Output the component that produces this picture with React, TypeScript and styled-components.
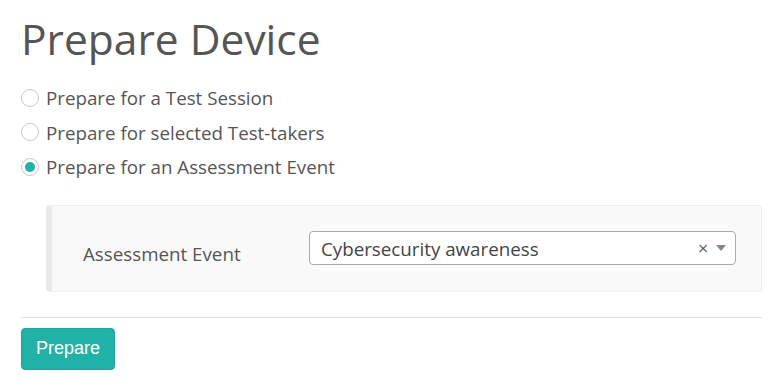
import React, { useState } from "react";
import styled, { createGlobalStyle } from "styled-components";

const GlobalStyle = createGlobalStyle`
  body {
    margin: 0;
    background: #fff;
    font-family: "Open Sans", "Noto Sans", sans-serif;
    color: #555;
  }
`;

const Page = styled.div`
  padding: 0 13px 0 21px;
`;

const Title = styled.h1`
  margin: 11px 0 18px;
  font-size: 42.5px;
  font-weight: 400;
  line-height: 56px;
  color: #555;
`;

const RadioList = styled.div`
  display: flex;
  flex-direction: column;
  gap: 9.5px;
`;

const RadioRow = styled.label`
  display: flex;
  align-items: center;
  gap: 7px;
  font-size: 18.75px;
  line-height: 25px;
  cursor: pointer;
`;

const RadioCircle = styled.span<{ $checked: boolean }>`
  box-sizing: border-box;
  width: 18px;
  height: 18px;
  border-radius: 50%;
  border: 1px solid #c8c8c8;
  background: #fff;
  display: flex;
  align-items: center;
  justify-content: center;
  &::after {
    content: "";
    width: 10px;
    height: 10px;
    border-radius: 50%;
    background: ${(p) => (p.$checked ? "#20b2a6" : "transparent")};
  }
`;

const Panel = styled.div`
  margin: 25.5px 0 0 25px;
  background: #f9f9f9;
  border: 1px solid #eee;
  border-left: 6px solid #eaeaea;
  border-radius: 3px;
  padding: 25px 25px 25px 31px;
  display: flex;
  align-items: center;
`;

const FieldLabel = styled.div`
  width: 226px;
  font-size: 18.75px;
  padding-top: 10px;
`;

const Select = styled.div`
  flex: 1;
  height: 34px;
  box-sizing: border-box;
  background: #fff;
  border: 1px solid #aaa;
  border-radius: 4px;
  display: flex;
  align-items: center;
  padding: 0 9px 0 11px;
`;

const SelectValue = styled.span`
  flex: 1;
  font-size: 18.75px;
  color: #444;
`;

const Clear = styled.span`
  font-family: "DejaVu Sans", sans-serif;
  font-size: 14px;
  color: #555;
  margin-right: 7px;
`;

const Arrow = styled.span`
  width: 0;
  height: 0;
  border-left: 5px solid transparent;
  border-right: 5px solid transparent;
  border-top: 6px solid #888;
`;

const Divider = styled.hr`
  margin: 25px 0 10px;
  border: 0;
  border-top: 1px solid #e2e2e2;
`;

const Button = styled.button`
  background: #20b2a6;
  color: #fff;
  border: 1px solid #1ea497;
  border-radius: 4px;
  font-family: "Liberation Sans", Arial, sans-serif;
  font-size: 18px;
  height: 42px;
  padding: 0 14px;
  cursor: pointer;
`;

const options = [
  "Prepare for a Test Session",
  "Prepare for selected Test-takers",
  "Prepare for an Assessment Event",
];

export default function App() {
  const [selected, setSelected] = useState(2);
  return (
    <Page>
      <GlobalStyle />
      <Title>Prepare Device</Title>
      <RadioList>
        {options.map((o, i) => (
          <RadioRow key={o} onClick={() => setSelected(i)}>
            <RadioCircle $checked={selected === i} />
            {o}
          </RadioRow>
        ))}
      </RadioList>
      <Panel>
        <FieldLabel>Assessment Event</FieldLabel>
        <Select>
          <SelectValue>Cybersecurity awareness</SelectValue>
          <Clear>×</Clear>
          <Arrow />
        </Select>
      </Panel>
      <Divider />
      <Button>Prepare</Button>
    </Page>
  );
}
